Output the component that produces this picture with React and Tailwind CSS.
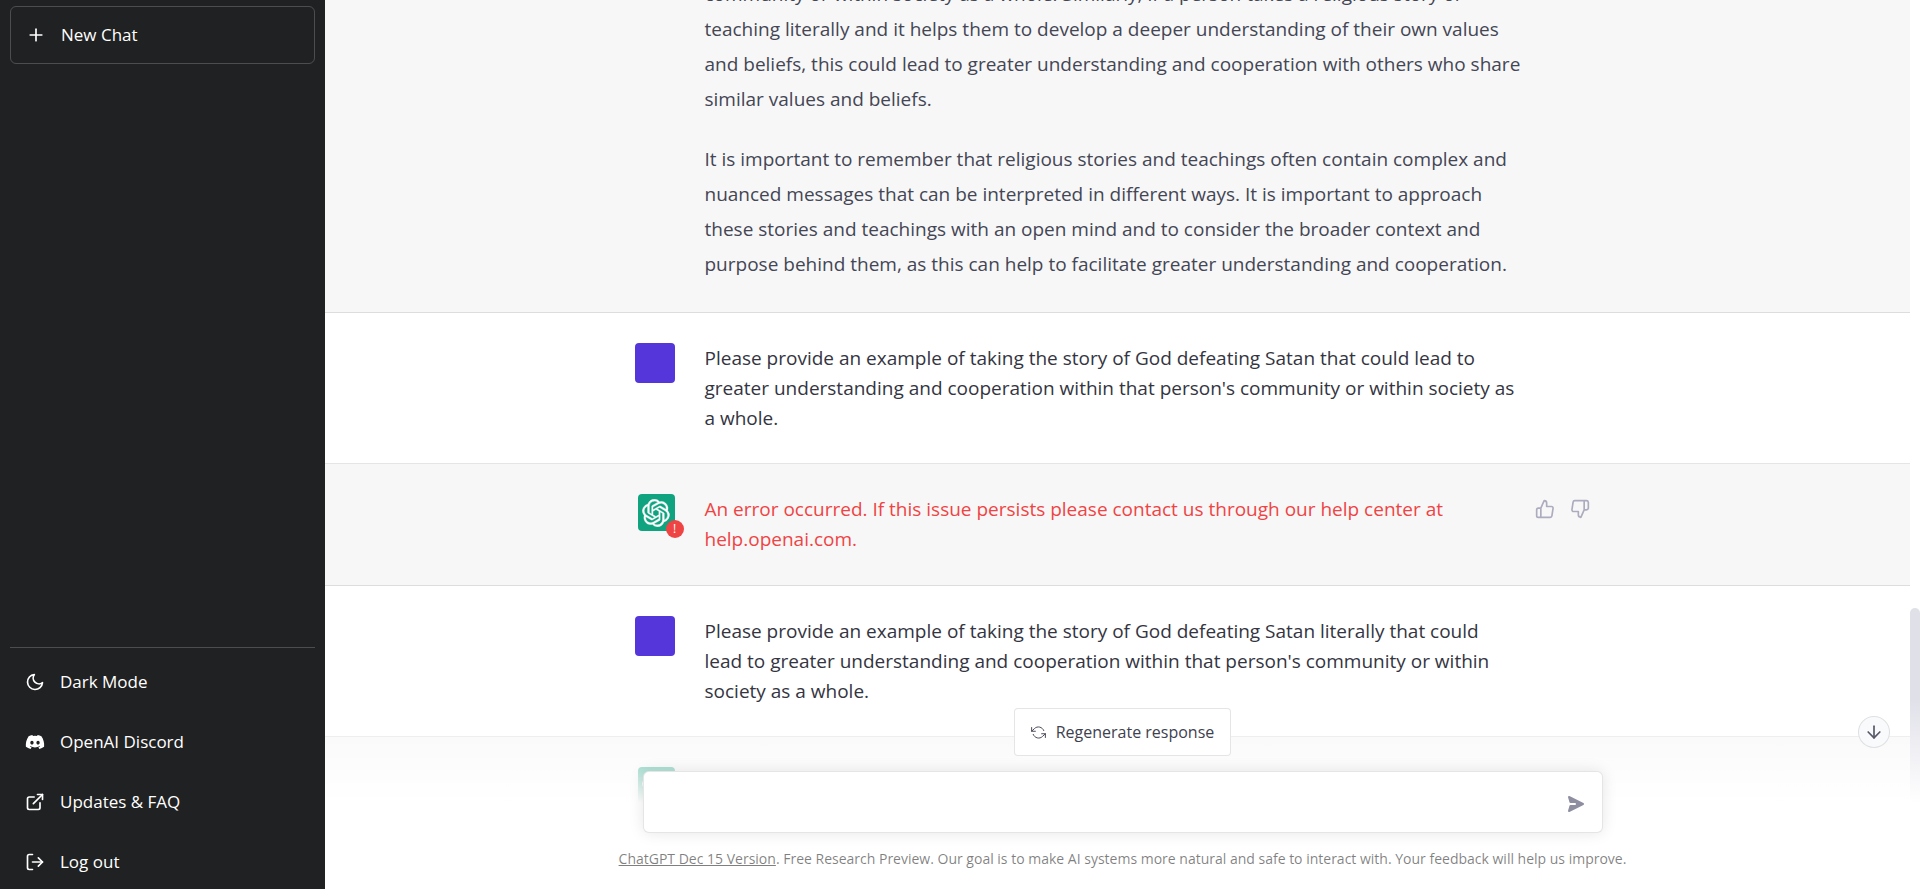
import { FiPlus, FiMoon, FiExternalLink, FiLogOut, FiThumbsUp, FiThumbsDown, FiRefreshCcw, FiArrowDown } from "react-icons/fi"
import { FaDiscord } from "react-icons/fa"

const links = [
  { label: "Dark Mode", icon: FiMoon },
  { label: "OpenAI Discord", icon: FaDiscord },
  { label: "Updates & FAQ", icon: FiExternalLink },
  { label: "Log out", icon: FiLogOut },
]

function OpenAILogo() {
  return (
    <svg width="28" height="28" viewBox="0 0 41 41" fill="currentColor" stroke="currentColor" strokeWidth="0.6" aria-hidden="true">
      <path d="M37.532 16.87a9.963 9.963 0 0 0-.856-8.184 10.078 10.078 0 0 0-10.855-4.835A9.964 9.964 0 0 0 18.306.5a10.079 10.079 0 0 0-9.614 6.977 9.967 9.967 0 0 0-6.664 4.834 10.08 10.08 0 0 0 1.24 11.817 9.965 9.965 0 0 0 .856 8.185 10.079 10.079 0 0 0 10.855 4.835 9.965 9.965 0 0 0 7.516 3.35 10.078 10.078 0 0 0 9.617-6.981 9.967 9.967 0 0 0 6.663-4.834 10.079 10.079 0 0 0-1.243-11.813ZM22.498 37.886a7.474 7.474 0 0 1-4.799-1.735c.061-.033.168-.091.237-.134l7.964-4.6a1.294 1.294 0 0 0 .655-1.134V19.054l3.366 1.944a.12.12 0 0 1 .066.092v9.299a7.505 7.505 0 0 1-7.49 7.496ZM6.392 31.006a7.471 7.471 0 0 1-.894-5.023c.06.036.162.099.237.141l7.964 4.6a1.297 1.297 0 0 0 1.308 0l9.724-5.614v3.888a.12.12 0 0 1-.048.103l-8.051 4.649a7.504 7.504 0 0 1-10.24-2.744ZM4.297 13.62A7.469 7.469 0 0 1 8.2 10.333c0 .068-.004.19-.004.274v9.201a1.294 1.294 0 0 0 .654 1.132l9.723 5.614-3.366 1.944a.12.12 0 0 1-.114.01L7.04 23.856a7.504 7.504 0 0 1-2.743-10.237Zm27.658 6.437-9.724-5.615 3.367-1.943a.121.121 0 0 1 .113-.01l8.052 4.648a7.498 7.498 0 0 1-1.158 13.528v-9.476a1.293 1.293 0 0 0-.65-1.132Zm3.35-5.043c-.059-.037-.162-.099-.236-.141l-7.965-4.6a1.298 1.298 0 0 0-1.308 0l-9.723 5.614v-3.888a.12.12 0 0 1 .048-.103l8.05-4.645a7.497 7.497 0 0 1 11.135 7.763Zm-21.063 6.929-3.367-1.944a.12.12 0 0 1-.065-.092v-9.299a7.497 7.497 0 0 1 12.293-5.756 6.94 6.94 0 0 0-.236.134l-7.965 4.6a1.294 1.294 0 0 0-.654 1.132l-.006 11.225Zm1.829-3.943 4.33-2.501 4.332 2.5v5l-4.331 2.5-4.331-2.5V18Z" />
    </svg>
  )
}

function Message({ fromBot, error, children }) {
  return (
    <div className={`border-b border-black/10 shrink-0 ${fromBot ? "bg-[#f7f7f8] text-[#444654]" : "bg-white text-[#343541]"}`}>
      <div className="mx-auto flex max-w-[960px] gap-[30px] py-[30px]">
        <div className="flex w-[37px] shrink-0 justify-end">
          {fromBot ? (
            <div className="relative flex size-[37px] items-center justify-center rounded-sm bg-[#10a37f] text-white">
              <OpenAILogo />
              {error && (
                <span className="absolute -right-[9px] -bottom-[7px] flex size-[18px] items-center justify-center rounded-full bg-[#ef4444] text-[12px] leading-none text-white">
                  !
                </span>
              )}
            </div>
          ) : (
            <div className="size-10 shrink-0 rounded-sm bg-[#5436da]" />
          )}
        </div>
        <div className="flex min-h-[61px] min-w-0 flex-1 gap-1">
          <div className="min-w-0 flex-1">{children}</div>
          <div className="flex w-[65px] shrink-0 gap-[10px] pt-[5px] text-[#acacbe]">
            {error && (
              <>
                <button aria-label="Good response" className="flex h-[25px] w-[25px] justify-center">
                  <FiThumbsUp size={20} />
                </button>
                <button aria-label="Bad response" className="flex h-[25px] w-[25px] justify-center">
                  <FiThumbsDown size={20} />
                </button>
              </>
            )}
          </div>
        </div>
      </div>
    </div>
  )
}

function Sidebar() {
  return (
    <nav className="flex w-[325px] shrink-0 flex-col justify-between bg-[#202122] px-[10px] pt-[6px] text-[17px] text-white">
      <button className="flex h-[58px] items-center gap-[15px] rounded-md border border-white/20 px-[15px]">
        <FiPlus size={20} />
        New Chat
      </button>
      <div className="flex flex-col gap-[5px] border-t border-white/20 pt-[6px]">
        {links.map(({ label, icon: Icon }) => (
          <a key={label} href="#" className="flex h-[55px] items-center gap-[15px] px-[15px]">
            <Icon size={20} />
            {label}
          </a>
        ))}
      </div>
    </nav>
  )
}

function Composer() {
  return (
    <div className="absolute inset-x-0 bottom-0 bg-linear-to-b from-transparent via-white via-55% to-white">
      <form className="mx-auto flex max-w-[960px] flex-col items-center gap-[15px] pt-[10px]">
        <button type="button" className="flex h-12 items-center gap-[10px] rounded-sm border border-black/10 bg-white px-4 text-[16px] text-[#40414f]">
          <FiRefreshCcw size={15} strokeWidth={1.5} />
          Regenerate response
        </button>
        <div className="flex w-full items-center rounded-md border border-black/10 bg-white py-4 pr-4 pl-5 shadow-[0_0_15px_rgba(0,0,0,0.10)]">
          <textarea aria-label="Message" rows={1} className="h-7 flex-1 resize-none outline-none" />
          <button type="button" aria-label="Send" className="pt-1 text-[#8e8ea0]">
            <svg width="20" height="20" viewBox="0 0 20 20" fill="currentColor">
              <path d="M10.894 2.553a1 1 0 0 0-1.788 0l-7 14a1 1 0 0 0 1.169 1.409l5-1.429A1 1 0 0 0 9 15.571V11a1 1 0 1 1 2 0v4.571a1 1 0 0 0 .725.962l5 1.428a1 1 0 0 0 1.17-1.408l-7-14z" transform="rotate(90 10 10)" />
            </svg>
          </button>
        </div>
      </form>
      <p className="pt-4 pb-5 text-center text-[14px] leading-5 text-black/50">
        <a href="#" className="underline">ChatGPT Dec 15 Version</a>. Free Research Preview. Our goal is to make AI systems more natural and safe to interact with. Your feedback will help us improve.
      </p>
    </div>
  )
}

function App() {
  return (
    <div className="flex h-screen overflow-hidden font-['Open_Sans',sans-serif]">
      <Sidebar />
      <main className="relative flex min-w-0 flex-1 overflow-hidden bg-white">
        <div className="flex min-w-0 flex-1 flex-col justify-end text-[19px] leading-[30px]">
          <Message fromBot>
            <div className="space-y-[25px] pt-[70px] leading-[35px]">
              <p>
                community or within society as a whole. Similarly, if a person takes a religious story or teaching literally and it helps them to develop a deeper understanding of their own values and beliefs, this could lead to greater understanding and cooperation with others who share similar values and beliefs.
              </p>
              <p>
                It is important to remember that religious stories and teachings often contain complex and nuanced messages that can be interpreted in different ways. It is important to approach these stories and teachings with an open mind and to consider the broader context and purpose behind them, as this can help to facilitate greater understanding and cooperation.
              </p>
            </div>
          </Message>
          <Message>
            Please provide an example of taking the story of God defeating Satan that could lead to greater understanding and cooperation within that person's community or within society as a whole.
          </Message>
          <Message fromBot error>
            <p className="text-[#ef4444]">
              An error occurred. If this issue persists please contact us through our help center at help.openai.com.
            </p>
          </Message>
          <Message>
            Please provide an example of taking the story of God defeating Satan literally that could
            <br />
            lead to greater understanding and cooperation within that person's community or within society as a whole.
          </Message>
          <Message fromBot>
            <div className="h-[91px]" />
          </Message>
        </div>
        <div className="flex w-[10px] shrink-0 flex-col justify-end">
          <div className="h-[281px] rounded-t-full bg-[#e0e0e9]" />
        </div>
        <Composer />
        <button aria-label="Scroll to bottom" className="absolute right-[30px] bottom-[141px] flex size-8 items-center justify-center rounded-full border border-black/10 bg-gray-50 text-[#565869]">
          <FiArrowDown size={20} />
        </button>
      </main>
    </div>
  )
}

export default App
